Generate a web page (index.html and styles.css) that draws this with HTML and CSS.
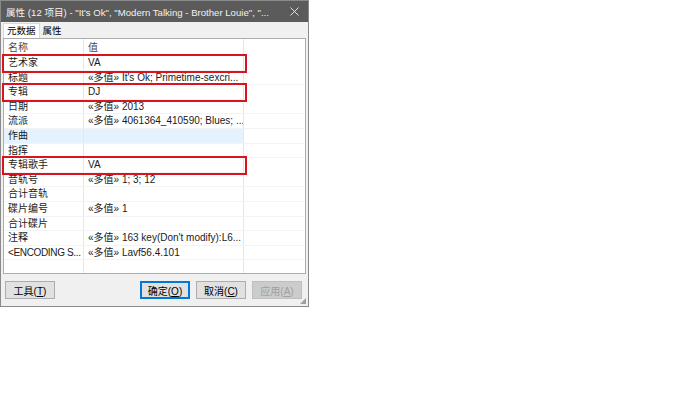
FILE: index.html
```html
<!DOCTYPE html>
<html lang="zh">
<head>
  <meta charset="UTF-8" />
  <title>属性</title>
  <link rel="stylesheet" href="styles.css">
</head>
<body>

<div class="dialog">
  <div class="titlebar">
    <span class="title">属性 (12 项目) - "It's Ok", "Modern Talking - Brother Louie", "...</span>
    <svg class="close" width="9" height="9" viewBox="0 0 9 9"><path d="M0.5 0.5 L8.5 8.5 M8.5 0.5 L0.5 8.5" stroke="#f2f2f2" stroke-width="0.9" fill="none"/></svg>
  </div>

  <div class="tabs">
    <div class="tab active">元数据</div>
    <div class="tab">属性</div>
  </div>

  <div class="panel">
    <div class="row head"><div class="c1">名称</div><div class="c2">值</div><div class="c3"></div></div>
    <div class="row marked"><div class="c1">艺术家</div><div class="c2">VA</div><div class="c3"></div></div>
    <div class="row"><div class="c1">标题</div><div class="c2">«多值» It's Ok; Primetime-sexcri...</div><div class="c3"></div></div>
    <div class="row marked"><div class="c1">专辑</div><div class="c2">DJ</div><div class="c3"></div></div>
    <div class="row"><div class="c1">日期</div><div class="c2">«多值» 2013</div><div class="c3"></div></div>
    <div class="row"><div class="c1">流派</div><div class="c2">«多值» 4061364_410590; Blues; ...</div><div class="c3"></div></div>
    <div class="row hover"><div class="c1">作曲</div><div class="c2"></div><div class="c3"></div></div>
    <div class="row"><div class="c1">指挥</div><div class="c2"></div><div class="c3"></div></div>
    <div class="row marked"><div class="c1">专辑歌手</div><div class="c2">VA</div><div class="c3"></div></div>
    <div class="row"><div class="c1">音轨号</div><div class="c2">«多值» 1; 3; 12</div><div class="c3"></div></div>
    <div class="row"><div class="c1">合计音轨</div><div class="c2"></div><div class="c3"></div></div>
    <div class="row"><div class="c1">碟片编号</div><div class="c2">«多值» 1</div><div class="c3"></div></div>
    <div class="row"><div class="c1">合计碟片</div><div class="c2"></div><div class="c3"></div></div>
    <div class="row"><div class="c1">注释</div><div class="c2">«多值» 163 key(Don't modify):L6...</div><div class="c3"></div></div>
    <div class="row"><div class="c1 tight">&lt;ENCODING S...</div><div class="c2">«多值» Lavf56.4.101</div><div class="c3"></div></div>
    <div class="row filler"><div class="c1"></div><div class="c2"></div><div class="c3"></div></div>
  </div>

  <div class="buttons">
    <button class="btn">工具(<u>T</u>)</button>
    <div class="spacer"></div>
    <button class="btn default">确定(<u>O</u>)</button>
    <button class="btn">取消(<u>C</u>)</button>
    <button class="btn disabled">应用(<u>A</u>)</button>
  </div>
  <div class="grip"></div>
</div>

</body>
</html>
```

FILE: styles.css
```css
body {
  margin: 0;
  background: #fff;
  font-family: "Liberation Sans", "Noto Sans CJK SC", sans-serif;
}
.dialog {
  position: relative;
  width: 307px;
  height: 305px;
  background: #f0f0f0;
  border: 1px solid #8a8a8a;
  display: flex;
  flex-direction: column;
}
.titlebar {
  height: 21px;
  background: #5b5b5b;
  color: #f2f2f2;
  display: flex;
  align-items: center;
  padding: 0 9px 0 5px;
  font-size: 9.6px;
  white-space: nowrap;
}
.title { flex: 1; overflow: hidden; }
.close { margin-left: 8px; }

.tabs {
  display: flex;
  height: 15px;
  padding-left: 2px;
  margin-top: 1px;
  font-size: 9.5px;
}
.tab {
  padding: 0 3px;
  line-height: 15px;
  color: #000;
}
.tab.active {
  background: #fff;
  border: 1px solid #d9d9d9;
  border-bottom: none;
  line-height: 14px;
}

.panel {
  margin: 0 2px 0 2px;
  height: 234px;
  background: #fff;
  border: 1px solid #adadad;
  display: flex;
  flex-direction: column;
  font-size: 10px;
}
.row {
  display: flex;
  height: 14.6px;
  line-height: 14.6px;
  border-bottom: 1px solid #f3f3f3;
  box-sizing: border-box;
  color: #1a1a1a;
  white-space: nowrap;
}
.row.head { height: 17px; line-height: 17px; color: #4a4a4a; border-bottom: none; }
.row.filler { flex: 1; border-bottom: none; }
.c1 { width: 80px; padding-left: 4px; box-sizing: border-box; border-right: 1px solid #e6e6e6; overflow: hidden; }
.c1.tight { letter-spacing: -0.35px; }
.c2 { width: 160px; padding-left: 4px; box-sizing: border-box; border-right: 1px solid #e6e6e6; overflow: hidden; }
.c3 { flex: 1; }
.row.hover .c1, .row.hover .c2 { background: #e5f3ff; }
.row.marked {
  outline: 2.5px solid #d9131f;
  outline-offset: 0;
  width: 241px;
  position: relative;
  z-index: 1;
}
.row.marked .c3 { display: none; }

.buttons {
  display: flex;
  gap: 6px;
  padding: 7px 6px 0 4px;
}
.spacer { flex: 1; }
.btn {
  width: 50px;
  height: 18px;
  padding: 0;
  background: #e1e1e1;
  border: 1px solid #adadad;
  font-family: inherit;
  font-size: 10px;
  color: #000;
}
.btn.default { border: 1px solid #0078d7; box-shadow: inset 0 0 0 1px #0078d7; }
.btn.disabled { background: #cccccc; border-color: #bfbfbf; color: #a0a0a0; }
.grip {
  position: absolute;
  right: 2px;
  bottom: 2px;
  width: 6px;
  height: 6px;
  background: radial-gradient(circle, #a0a0a0 0.8px, transparent 1px) 0 0 / 2px 2px;
  clip-path: polygon(100% 0, 100% 100%, 0 100%);
}
```
